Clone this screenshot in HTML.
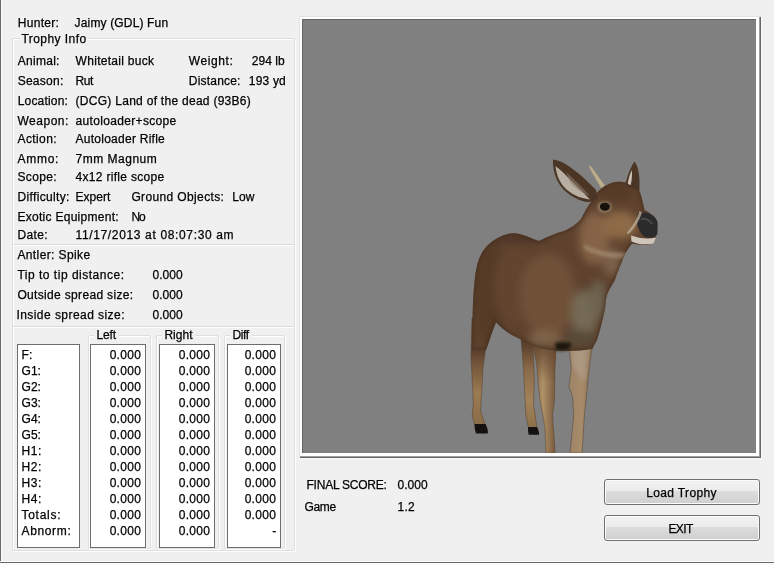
<!DOCTYPE html>
<html><head><meta charset="utf-8">
<style>
html,body{margin:0;padding:0;}
body{width:774px;height:565px;position:relative;overflow:hidden;background:#f0f0f0;font-family:"Liberation Sans",sans-serif;font-size:12px;color:#000;}
.t{position:absolute;white-space:pre;line-height:12px;-webkit-text-stroke:0.25px #000;}
.tl{position:absolute;left:0;top:0;width:774px;height:565px;will-change:transform;}
.a{position:absolute;box-sizing:border-box;}
.g{position:absolute;box-sizing:border-box;border:1px solid #dedede;box-shadow:1px 1px 0 #fff inset, 1px 1px 0 #fff;border-radius:2px;}
.box{position:absolute;box-sizing:border-box;background:#fff;border:1px solid #6e6e6e;}
.btn{position:absolute;box-sizing:border-box;border:1px solid #707070;border-radius:3px;background:linear-gradient(#f2f2f2 0%,#ebebeb 45%,#dddddd 45%,#cfcfcf 100%);box-shadow:inset 0 0 0 1px #fcfcfc;}
</style></head><body>
<!-- window border -->
<div class="a" style="left:0;top:0;width:1px;height:563px;background:#6a6a6a"></div>
<div class="a" style="left:1px;top:0;width:1px;height:561px;background:#fbfbfb"></div>
<div class="a" style="left:0;top:561px;width:774px;height:1px;background:#fbfbfb"></div>
<div class="a" style="left:0;top:562px;width:774px;height:1px;background:#6a6a6a"></div>
<div class="a" style="left:0;top:563px;width:774px;height:2px;background:#fafafa"></div>

<!-- group boxes -->
<div class="g" style="left:12px;top:38px;width:283px;height:513px;"></div>
<div class="a" style="left:13px;top:244px;width:281px;height:1px;background:#dadada"></div>
<div class="a" style="left:13px;top:245px;width:281px;height:1px;background:#fff"></div>
<div class="a" style="left:13px;top:326px;width:281px;height:1px;background:#dadada"></div>
<div class="a" style="left:13px;top:327px;width:281px;height:1px;background:#fff"></div>
<div class="g" style="left:88px;top:335px;width:63px;height:214px;"></div>
<div class="g" style="left:156px;top:335px;width:63px;height:214px;"></div>
<div class="g" style="left:224px;top:335px;width:61px;height:214px;"></div>
<!-- label gaps -->
<div class="a" style="left:19px;top:34px;width:69px;height:8px;background:#f0f0f0"></div>
<div class="a" style="left:94px;top:332px;width:25px;height:8px;background:#f0f0f0"></div>
<div class="a" style="left:162px;top:332px;width:33px;height:8px;background:#f0f0f0"></div>
<div class="a" style="left:230px;top:332px;width:22px;height:8px;background:#f0f0f0"></div>

<!-- table boxes -->
<div class="box" style="left:17px;top:344px;width:63px;height:204px;"></div>
<div class="box" style="left:90px;top:344px;width:56px;height:204px;"></div>
<div class="box" style="left:159px;top:344px;width:56px;height:204px;"></div>
<div class="box" style="left:227px;top:344px;width:54px;height:204px;"></div>

<!-- viewport -->
<div class="a" style="left:299px;top:16px;width:463px;height:443px;background:#fafafa"></div>
<div class="a" style="left:299px;top:16px;width:462px;height:442px;background:#e3e3e3"></div>
<div class="a" style="left:300px;top:17px;width:461px;height:441px;background:#646464"></div>
<div class="a" style="left:300px;top:17px;width:460px;height:440px;background:#a0a0a0"></div>
<div class="a" style="left:300px;top:17px;width:459px;height:439px;background:#fff"></div>
<div class="a" style="left:302px;top:19px;width:454px;height:434px;background:#646464"></div>
<div class="a" style="left:303px;top:20px;width:453px;height:433px;background:#808080;overflow:hidden;">
<svg width="774" height="565" viewBox="0 0 774 565" style="position:absolute;left:-303px;top:-20px">
<defs>
 <filter id="b4" x="-50%" y="-50%" width="200%" height="200%"><feGaussianBlur stdDeviation="4"/></filter>
 <filter id="b2" x="-50%" y="-50%" width="200%" height="200%"><feGaussianBlur stdDeviation="1.6"/></filter>
 <filter id="b1" x="-50%" y="-50%" width="200%" height="200%"><feGaussianBlur stdDeviation="0.6"/></filter>
 <linearGradient id="legA" x1="0" y1="0" x2="0" y2="1">
  <stop offset="0" stop-color="#553b28"/><stop offset="0.3" stop-color="#5a3f2b"/><stop offset="0.45" stop-color="#76583c"/><stop offset="0.7" stop-color="#9a7b52"/><stop offset="1" stop-color="#8a6c48"/>
 </linearGradient>
 <linearGradient id="legB" x1="0" y1="0" x2="0" y2="1">
  <stop offset="0" stop-color="#4f3726"/><stop offset="0.35" stop-color="#8a6b48"/><stop offset="0.7" stop-color="#a2835a"/><stop offset="1" stop-color="#8d6f4a"/>
 </linearGradient>
 <linearGradient id="legC" x1="0" y1="0" x2="1" y2="0">
  <stop offset="0" stop-color="#7a5c3c"/><stop offset="0.45" stop-color="#b09268"/><stop offset="1" stop-color="#6e5236"/>
 </linearGradient>
 <linearGradient id="legCv" x1="0" y1="0" x2="0" y2="1">
  <stop offset="0" stop-color="#654732" stop-opacity="1"/><stop offset="0.12" stop-color="#654732" stop-opacity="0.8"/><stop offset="0.4" stop-color="#654732" stop-opacity="0"/>
 </linearGradient>
 <linearGradient id="legD" x1="0" y1="0" x2="1" y2="0">
  <stop offset="0" stop-color="#9c8468"/><stop offset="0.45" stop-color="#a88c6a"/><stop offset="1" stop-color="#6f5538"/>
 </linearGradient>
 <clipPath id="sil">
  <path id="silp" d="M472,350 L472.5,320 C473,300 474,275 478,262 C481,252 488,243 497,238.5 C504,234 511,232.5 517,233.5 C525,235 532,239 539,241 C547,237 556,233 564,231 C571,228 577,224 581,219 C584,213 588,205 593,199.5 L596,194 C601,188 608,183 616,182 C624,181 632,183 638,188 C641,193 643,203 644.5,210 C648,212 654,215 656.5,220 C658,226 657.5,232 656,236 C655,241 652,244 647,244.5 C640,245 635,244 632,243.5 C629,247 627,251 625,254 C623,258 622,262 621,264 C618,271 616,276 615,280 C611,287 607,292 606,300 C605,312 602,322 600,330 L597,340 L592,349 C584,350 576,351 568,351 C558,351 550,350 544,349 C534,347 527,344 522,340 C512,336 503,330 496,322 L491.3,334 L486,350 Z"/>
 </clipPath>
</defs>
<!-- hind legs -->
<path d="M472,318 L471,356 L472.2,380 L473.4,404 L472.2,415.5 L474.6,425 L485.3,425 L480.5,411 L481.7,392 L483,368 L485.3,351 L491.3,334 L497,318 Z" fill="url(#legA)" stroke="#4a3626" stroke-width="0.8" stroke-opacity="0.55"/>
<path d="M474.6,424 L485.5,424 C487.5,428 488.2,431 487.8,433.6 L476,433.6 C475,430.5 474.4,427 474.6,424 Z" fill="#141210"/>
<path d="M521,338 L523.5,368 L524.7,392 L525.9,415.5 L528.3,427.5 L537,427.5 L533.5,404 L534.3,380 L533,345 Z" fill="url(#legB)" stroke="#4a3626" stroke-width="0.8" stroke-opacity="0.55"/>
<path d="M528,427 L537,427 C538.5,430 539.2,432.5 539,434.8 L528.6,434.8 C528,432 527.8,429.5 528,427 Z" fill="#141210"/>
<!-- far front leg D -->
<path d="M568,338 L571.3,368 L569,387 L572.5,396 L573.7,415.5 L570,453 L582,453 L584.4,415.5 L586.8,392 L589.2,368 L591.6,351 L599,325 Z" fill="url(#legD)" stroke="#4a3626" stroke-width="0.8" stroke-opacity="0.55"/>
<path d="M572,346 C577,343 584,339 592,336 C590,350 588,365 585.5,382 C580,377 576,372 573,366 Z" fill="#b0a092" filter="url(#b2)" opacity="0.55"/>
<!-- front leg C -->
<path d="M531,336 C534,350 536,360 537,368 C538,380 539,392 540,400 C542,410 544,420 545,430 L546,453 L555,453 C554.6,440 553,425 552.5,415 C554,405 555,398 554.6,390 L555,368 L557,336 Z" fill="url(#legC)" stroke="#4a3626" stroke-width="0.8" stroke-opacity="0.5"/>
<path d="M531,336 C534,350 536,360 537,368 C538,380 539,392 540,400 C542,410 544,420 545,430 L546,453 L555,453 C554.6,440 553,425 552.5,415 C554,405 555,398 554.6,390 L555,368 L557,336 Z" fill="url(#legCv)"/>
<!-- body silhouette with shading -->
<g clip-path="url(#sil)">
 <rect x="460" y="170" width="210" height="190" fill="#5e422e"/>
 <g filter="url(#b4)">
  <ellipse cx="490" cy="290" rx="16" ry="55" fill="#553a27"/>
  <ellipse cx="515" cy="285" rx="22" ry="40" fill="#62442f"/>
  <ellipse cx="548" cy="295" rx="28" ry="42" fill="#6f5139"/>
  <ellipse cx="584" cy="314" rx="13" ry="24" fill="#756b55"/>
  <ellipse cx="598" cy="300" rx="8" ry="20" fill="#6d6450"/>
  <ellipse cx="545" cy="338" rx="16" ry="8" fill="#7e6448"/>
  <ellipse cx="580" cy="338" rx="16" ry="8" fill="#564a38"/>
  <ellipse cx="594" cy="238" rx="15" ry="26" fill="#856447"/>
  <ellipse cx="612" cy="262" rx="10" ry="14" fill="#7a6048"/>
  <ellipse cx="520" cy="238" rx="26" ry="5" fill="#4e3625"/>
  <ellipse cx="620" cy="225" rx="18" ry="14" fill="#8e6a46"/>
  <ellipse cx="617" cy="192" rx="18" ry="9" fill="#563b27"/>
 </g>
 <use href="#silp" fill="none" stroke="#3e2c1e" stroke-width="4" opacity="0.45" filter="url(#b2)"/>
 <path d="M584,244 C596,250 610,254 626,252 L623,258 C608,259 595,255 584,249 Z" fill="#a89478" filter="url(#b2)" opacity="0.6"/>
 <path d="M632,243 C640,246 648,246 654,243 L650,247 C644,249 636,248 630,246 Z" fill="#3a2c20" filter="url(#b1)" opacity="0.7"/>
</g>
<!-- dark under belly -->
<path d="M555,343 C560,342 566,342 572,343.5 L569,349 C565,350.5 560,351 556,350 Z" fill="#1c1610" filter="url(#b2)"/>
<!-- left ear -->
<path d="M553,159.5 C560,160 568,165 576,171.5 C583,177 590,184 596,190 L598,199 C594,201 590,202.5 586,202 C577,200 569,195 563,189 C557,182 552.5,172 553,159.5 Z" fill="#4b3626"/>
<path d="M555.5,166 C556.5,176 560.5,184 566.5,189.5 C573.5,195.5 581.5,198.5 590,199.5 C584,193 576,185 568,177.5 C564,173 559.5,169 555.5,166 Z" fill="#b9aea2" filter="url(#b1)"/>
<path d="M566,172 C574,179 582,187 590,196 C583,194 575,188 570,182 Z" fill="#8a7868" filter="url(#b1)" opacity="0.6"/>
<!-- right ear -->
<path d="M634.5,161.5 C637.5,165 639,172 639.5,180 L639.5,190 L625,186 C627,177 630,168 634.5,161.5 Z" fill="#4b3626"/>
<path d="M627.8,184 C628.3,179 629.8,174 631.8,170 C632.3,175 631.8,180 630.8,185 Z" fill="#cdc2b5" filter="url(#b1)"/>
<!-- antler spike -->
<path d="M588.8,166.3 L591,166.3 C595,172 600,179 604.8,185.5 L601.2,188 C597,181 592,173 588.8,166.3 Z" fill="#bcae88"/>
<!-- eye -->
<ellipse cx="604.6" cy="207" rx="7" ry="5.6" fill="#927a60" filter="url(#b2)"/>
<ellipse cx="604.9" cy="206.7" rx="5" ry="4" fill="#17120e"/>
<!-- nose -->
<path d="M638,213 C647,211 655,215 657.5,222 L657.3,234 C655,238 650,238.5 645,237 C639,233 635,224 638,213 Z" fill="#2c2b2b"/>
<path d="M641,219 C645,218 650,220 652,224" stroke="#4a4a4a" stroke-width="2" fill="none" filter="url(#b1)"/>
<path d="M639.5,211 C637.5,218 633,226 626.5,233 L628.5,234 C635,228 639.5,220 642,212.5 Z" fill="#b8ab98" filter="url(#b1)" opacity="0.8"/>
<!-- lower lip -->
<path d="M631,235.5 C640,238.5 648,239.5 656,237.5 L653.5,243.5 C646,245 638,244.5 631.5,241.5 Z" fill="#cfc4b8" filter="url(#b1)"/>
</svg>

</div>

<!-- buttons -->
<div class="btn" style="left:604px;top:479px;width:156px;height:26px;"></div>
<div class="btn" style="left:604px;top:515px;width:156px;height:26px;"></div>

<div class="tl">
<span class='t' style='left:17.70px;top:16.84px;letter-spacing:0.314px'>Hunter:</span>
<span class='t' style='left:74.60px;top:16.84px;letter-spacing:0.152px'>Jaimy (GDL) Fun</span>
<span class='t' style='left:21.40px;top:32.84px;letter-spacing:0.452px'>Trophy Info</span>
<span class='t' style='left:17.70px;top:54.54px;letter-spacing:0.287px'>Animal:</span>
<span class='t' style='left:75.60px;top:54.54px;letter-spacing:0.293px'>Whitetail buck</span>
<span class='t' style='left:188.80px;top:54.54px;letter-spacing:0.578px'>Weight:</span>
<span class='t' style='left:251.70px;top:54.54px;letter-spacing:0.076px'>294 lb</span>
<span class='t' style='left:17.70px;top:74.54px;letter-spacing:0.250px'>Season:</span>
<span class='t' style='left:75.60px;top:74.54px;letter-spacing:-0.520px'>Rut</span>
<span class='t' style='left:188.80px;top:74.54px;letter-spacing:0.202px'>Distance:</span>
<span class='t' style='left:248.80px;top:74.54px;letter-spacing:0.189px'>193 yd</span>
<span class='t' style='left:17.70px;top:94.94px;letter-spacing:0.191px'>Location:</span>
<span class='t' style='left:75.60px;top:94.94px;letter-spacing:0.278px'>(DCG) Land of the dead (93B6)</span>
<span class='t' style='left:17.50px;top:114.84px;letter-spacing:0.504px'>Weapon:</span>
<span class='t' style='left:75.50px;top:114.84px;letter-spacing:0.335px'>autoloader+scope</span>
<span class='t' style='left:17.50px;top:132.64px;letter-spacing:0.391px'>Action:</span>
<span class='t' style='left:75.50px;top:132.64px;letter-spacing:0.259px'>Autoloader Rifle</span>
<span class='t' style='left:17.50px;top:152.84px;letter-spacing:0.733px'>Ammo:</span>
<span class='t' style='left:75.50px;top:152.84px;letter-spacing:0.512px'>7mm Magnum</span>
<span class='t' style='left:17.50px;top:170.64px;letter-spacing:0.335px'>Scope:</span>
<span class='t' style='left:75.50px;top:170.64px;letter-spacing:0.315px'>4x12 rifle scope</span>
<span class='t' style='left:17.50px;top:190.84px;letter-spacing:0.338px'>Difficulty:</span>
<span class='t' style='left:75.50px;top:190.84px;letter-spacing:0.030px'>Expert</span>
<span class='t' style='left:131.40px;top:190.84px;letter-spacing:0.368px'>Ground Objects:</span>
<span class='t' style='left:232.30px;top:190.84px;letter-spacing:0.076px'>Low</span>
<span class='t' style='left:17.50px;top:210.84px;letter-spacing:0.276px'>Exotic Equipment:</span>
<span class='t' style='left:131.40px;top:210.84px;letter-spacing:-1.000px'>No</span>
<span class='t' style='left:17.50px;top:228.84px;letter-spacing:0.363px'>Date:</span>
<span class='t' style='left:75.50px;top:228.84px;letter-spacing:0.647px'>11/17/2013 at 08:07:30 am</span>
<span class='t' style='left:17.40px;top:248.94px;letter-spacing:0.395px'>Antler: Spike</span>
<span class='t' style='left:17.40px;top:268.74px;letter-spacing:0.510px'>Tip to tip distance:</span>
<span class='t' style='left:152.40px;top:268.74px;letter-spacing:0.061px'>0.000</span>
<span class='t' style='left:17.40px;top:288.94px;letter-spacing:0.334px'>Outside spread size:</span>
<span class='t' style='left:152.40px;top:288.94px;letter-spacing:0.061px'>0.000</span>
<span class='t' style='left:16.40px;top:308.94px;letter-spacing:0.449px'>Inside spread size:</span>
<span class='t' style='left:152.40px;top:308.94px;letter-spacing:0.061px'>0.000</span>
<span class='t' style='left:96.50px;top:328.64px;letter-spacing:-0.127px'>Left</span>
<span class='t' style='left:164.40px;top:328.64px;letter-spacing:0.055px'>Right</span>
<span class='t' style='left:232.50px;top:328.64px;letter-spacing:-0.383px'>Diff</span>
<span class='t' style='left:21.50px;top:349.44px;letter-spacing:0.070px'>F:</span>
<span class='t' style='right:632.83px;top:349.44px;letter-spacing:0.3px'>0.000</span>
<span class='t' style='right:563.73px;top:349.44px;letter-spacing:0.3px'>0.000</span>
<span class='t' style='right:497.83px;top:349.44px;letter-spacing:0.3px'>0.000</span>
<span class='t' style='left:21.50px;top:365.44px;letter-spacing:0.046px'>G1:</span>
<span class='t' style='right:632.83px;top:365.44px;letter-spacing:0.3px'>0.000</span>
<span class='t' style='right:563.73px;top:365.44px;letter-spacing:0.3px'>0.000</span>
<span class='t' style='right:497.83px;top:365.44px;letter-spacing:0.3px'>0.000</span>
<span class='t' style='left:21.50px;top:381.44px;letter-spacing:0.046px'>G2:</span>
<span class='t' style='right:632.83px;top:381.44px;letter-spacing:0.3px'>0.000</span>
<span class='t' style='right:563.73px;top:381.44px;letter-spacing:0.3px'>0.000</span>
<span class='t' style='right:497.83px;top:381.44px;letter-spacing:0.3px'>0.000</span>
<span class='t' style='left:21.50px;top:397.44px;letter-spacing:0.046px'>G3:</span>
<span class='t' style='right:632.83px;top:397.44px;letter-spacing:0.3px'>0.000</span>
<span class='t' style='right:563.73px;top:397.44px;letter-spacing:0.3px'>0.000</span>
<span class='t' style='right:497.83px;top:397.44px;letter-spacing:0.3px'>0.000</span>
<span class='t' style='left:21.50px;top:413.44px;letter-spacing:0.046px'>G4:</span>
<span class='t' style='right:632.83px;top:413.44px;letter-spacing:0.3px'>0.000</span>
<span class='t' style='right:563.73px;top:413.44px;letter-spacing:0.3px'>0.000</span>
<span class='t' style='right:497.83px;top:413.44px;letter-spacing:0.3px'>0.000</span>
<span class='t' style='left:21.50px;top:429.44px;letter-spacing:0.046px'>G5:</span>
<span class='t' style='right:632.83px;top:429.44px;letter-spacing:0.3px'>0.000</span>
<span class='t' style='right:563.73px;top:429.44px;letter-spacing:0.3px'>0.000</span>
<span class='t' style='right:497.83px;top:429.44px;letter-spacing:0.3px'>0.000</span>
<span class='t' style='left:21.50px;top:445.44px;letter-spacing:0.530px'>H1:</span>
<span class='t' style='right:632.83px;top:445.44px;letter-spacing:0.3px'>0.000</span>
<span class='t' style='right:563.73px;top:445.44px;letter-spacing:0.3px'>0.000</span>
<span class='t' style='right:497.83px;top:445.44px;letter-spacing:0.3px'>0.000</span>
<span class='t' style='left:21.50px;top:461.44px;letter-spacing:0.530px'>H2:</span>
<span class='t' style='right:632.83px;top:461.44px;letter-spacing:0.3px'>0.000</span>
<span class='t' style='right:563.73px;top:461.44px;letter-spacing:0.3px'>0.000</span>
<span class='t' style='right:497.83px;top:461.44px;letter-spacing:0.3px'>0.000</span>
<span class='t' style='left:21.50px;top:477.44px;letter-spacing:0.530px'>H3:</span>
<span class='t' style='right:632.83px;top:477.44px;letter-spacing:0.3px'>0.000</span>
<span class='t' style='right:563.73px;top:477.44px;letter-spacing:0.3px'>0.000</span>
<span class='t' style='right:497.83px;top:477.44px;letter-spacing:0.3px'>0.000</span>
<span class='t' style='left:21.50px;top:493.44px;letter-spacing:0.530px'>H4:</span>
<span class='t' style='right:632.83px;top:493.44px;letter-spacing:0.3px'>0.000</span>
<span class='t' style='right:563.73px;top:493.44px;letter-spacing:0.3px'>0.000</span>
<span class='t' style='right:497.83px;top:493.44px;letter-spacing:0.3px'>0.000</span>
<span class='t' style='left:21.50px;top:509.44px;letter-spacing:0.725px'>Totals:</span>
<span class='t' style='right:632.83px;top:509.44px;letter-spacing:0.3px'>0.000</span>
<span class='t' style='right:563.73px;top:509.44px;letter-spacing:0.3px'>0.000</span>
<span class='t' style='right:497.83px;top:509.44px;letter-spacing:0.3px'>0.000</span>
<span class='t' style='left:21.50px;top:525.44px;letter-spacing:0.647px'>Abnorm:</span>
<span class='t' style='right:632.83px;top:525.44px;letter-spacing:0.3px'>0.000</span>
<span class='t' style='right:563.73px;top:525.44px;letter-spacing:0.3px'>0.000</span>
<span class='t' style='right:497.50px;top:525.44px;letter-spacing:0.3px'>-</span>
<span class='t' style='left:306.50px;top:478.64px;letter-spacing:-0.229px'>FINAL SCORE:</span>
<span class='t' style='left:397.50px;top:478.64px;letter-spacing:0.036px'>0.000</span>
<span class='t' style='left:304.50px;top:500.74px;letter-spacing:-0.335px'>Game</span>
<span class='t' style='left:397.50px;top:500.74px;letter-spacing:0.246px'>1.2</span>
<span class='t' style='left:646.30px;top:487.04px;letter-spacing:0.347px'>Load Trophy</span>
<span class='t' style='left:668.40px;top:522.84px;letter-spacing:-0.614px'>EXIT</span>
</div>
</body></html>
